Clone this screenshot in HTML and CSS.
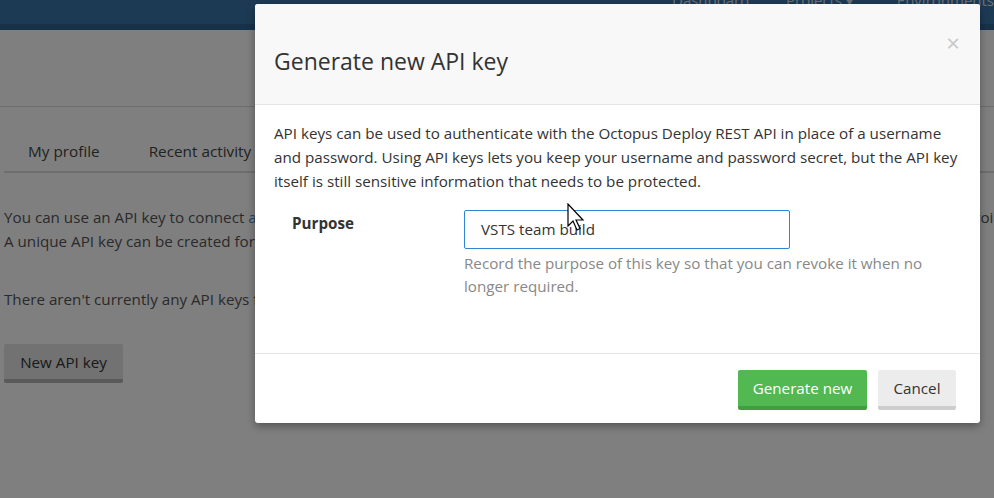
FILE: index.html
```html
<!DOCTYPE html>
<html lang="en">
<head>
<meta charset="utf-8">
<title>API keys</title>
<link rel="stylesheet" href="styles.css">
</head>
<body>
<div class="page">
  <header class="topnav">
    <nav class="topnav-links">
      <a class="topnav-link">Dashboard</a>
      <a class="topnav-link">Projects <span class="caret">&#9662;</span></a>
      <a class="topnav-link">Environments</a>
    </nav>
  </header>
  <div class="subheader"></div>
  <main class="content">
    <ul class="tabs">
      <li class="tab">My profile</li>
      <li class="tab">Recent activity</li>
      <li class="tab">API keys</li>
    </ul>
    <p class="lead">You can use an API key to connect <a class="link">applications</a> such as the Octopus command-line tool and build servers to the Octopus REST API, or Android apps and other tools.</p>
    <p class="lead">A unique API key can be created for each application that needs access.</p>
    <p class="empty">There aren't currently any API keys for this user.</p>
    <button class="btn-page">New API key</button>
  </main>
</div>

<div class="backdrop"></div>

<div class="modal">
  <div class="modal-header">
    <h2 class="modal-title">Generate new API key</h2>
    <span class="close">&times;</span>
  </div>
  <div class="modal-body">
    <p class="intro">API keys can be used to authenticate with the Octopus Deploy REST API in place of a username and password. Using API keys lets you keep your username and password secret, but the API key itself is still sensitive information that needs to be protected.</p>
    <div class="form-row">
      <label class="form-label">Purpose</label>
      <div class="form-field">
        <div class="input">VSTS team build</div>
        <p class="help">Record the purpose of this key so that you can revoke it when no longer required.</p>
      </div>
    </div>
  </div>
  <div class="modal-footer">
    <button class="btn btn-success">Generate new</button>
    <button class="btn btn-default">Cancel</button>
  </div>
</div>

<svg class="cursor" width="20" height="30" viewBox="0 0 20 30">
  <path d="M1 1 L1 23 L6 18 L10 27 L13 25.5 L9 17 L16 17 Z" fill="#fff" stroke="#000" stroke-width="1.2" stroke-linejoin="miter"/>
</svg>
</body>
</html>
```

FILE: styles.css
```css
* { box-sizing: border-box; }
html, body { margin: 0; padding: 0; }
body {
  width: 994px;
  height: 498px;
  overflow: hidden;
  background: #fff;
  font-family: "Open Sans", "Noto Sans", sans-serif;
  font-size: 15.2px;
  color: #333;
  position: relative;
}

.page { width: 994px; }

.topnav {
  height: 30px;
  background: #3a74aa;
  border-bottom: 6px solid #2f6292;
  overflow: hidden;
}
.topnav-links {
  display: flex;
  gap: 38px;
  margin-top: -11px;
  padding-left: 672px;
}
.topnav-link {
  color: #d9e3ee;
  font-size: 15px;
  line-height: 22px;
  white-space: nowrap;
}
.topnav-link:nth-child(1) { width: 76px; }
.topnav-link:nth-child(2) { width: 76px; }
.caret { font-size: 14px; }

.subheader {
  height: 77px;
  border-bottom: 1px solid #ddd;
}

.content { padding: 0 0 0 4px; }

.tabs {
  list-style: none;
  margin: 22px 0 0;
  padding: 0;
  display: flex;
  border-bottom: 2px solid #ddd;
  white-space: nowrap;
}
.tab {
  padding: 12px 24px 9px;
  font-size: 15.3px;
  color: #444;
  line-height: 21px;
}
.tab:nth-child(2) { padding-left: 25px; }

.lead {
  margin: 0;
  line-height: 24px;
  color: #555;
  white-space: nowrap;
}
.lead:first-of-type { margin-top: 32px; }
.link { color: #3a8fd8; }
.empty {
  margin: 34px 0 0;
  line-height: 24px;
  color: #555;
  white-space: nowrap;
}
.btn-page {
  margin-top: 33px;
  height: 39px;
  width: 119px;
  border: 0;
  border-bottom: 4px solid #b5b5b5;
  border-radius: 2px;
  background: #e4e4e4;
  color: #333;
  font-family: inherit;
  font-size: 15.2px;
  padding: 0;
}

.backdrop {
  position: absolute;
  inset: 0;
  background: rgba(0, 0, 0, 0.5);
}

.modal {
  position: absolute;
  left: 255px;
  top: 4px;
  width: 725px;
  background: #fff;
  border-radius: 3px;
  box-shadow: 0 3px 9px rgba(0, 0, 0, 0.35);
}
.modal-header {
  position: relative;
  height: 101px;
  background: #f8f8f8;
  border-bottom: 1px solid #e5e5e5;
  border-radius: 3px 3px 0 0;
  padding: 42px 19px 0;
}
.modal-title {
  margin: 0;
  font-weight: 400;
  font-size: 23px;
  line-height: 30px;
  color: #333;
}
.close {
  position: absolute;
  right: 20px;
  top: 24px;
  font-size: 24px;
  line-height: 30px;
  color: #c8c8c8;
}
.modal-body {
  padding: 16px 15px 55px 19px;
}
.intro {
  margin: 0;
  line-height: 24px;
}
.form-row {
  display: grid;
  grid-template-columns: 190px 1fr;
  margin-top: 17px;
}
.form-label {
  padding: 1px 0 0 18px;
  font-weight: 700;
  line-height: 24px;
}
.input {
  width: 326px;
  height: 39px;
  border: 1px solid #2f86d4;
  border-radius: 2px;
  padding: 0 16px;
  line-height: 37px;
  color: #333;
}
.help {
  max-width: 480px;
  margin: 3px 0 0;
  line-height: 23px;
  color: #888;
}
.modal-footer {
  border-top: 1px solid #e5e5e5;
  padding: 16px 24px 13px;
  display: flex;
  justify-content: flex-end;
  gap: 11px;
}
.btn {
  height: 40px;
  border: 0;
  border-radius: 2px;
  font-family: inherit;
  font-size: 15.2px;
  padding: 0;
  line-height: 36px;
}
.btn-success {
  width: 129px;
  background: #52b852;
  border-bottom: 4px solid #3f9f3f;
  color: #fff;
}
.btn-default {
  width: 78px;
  background: #ececec;
  border-bottom: 4px solid #cdcdcd;
  color: #333;
}

.cursor {
  position: absolute;
  left: 567px;
  top: 203px;
}
```
